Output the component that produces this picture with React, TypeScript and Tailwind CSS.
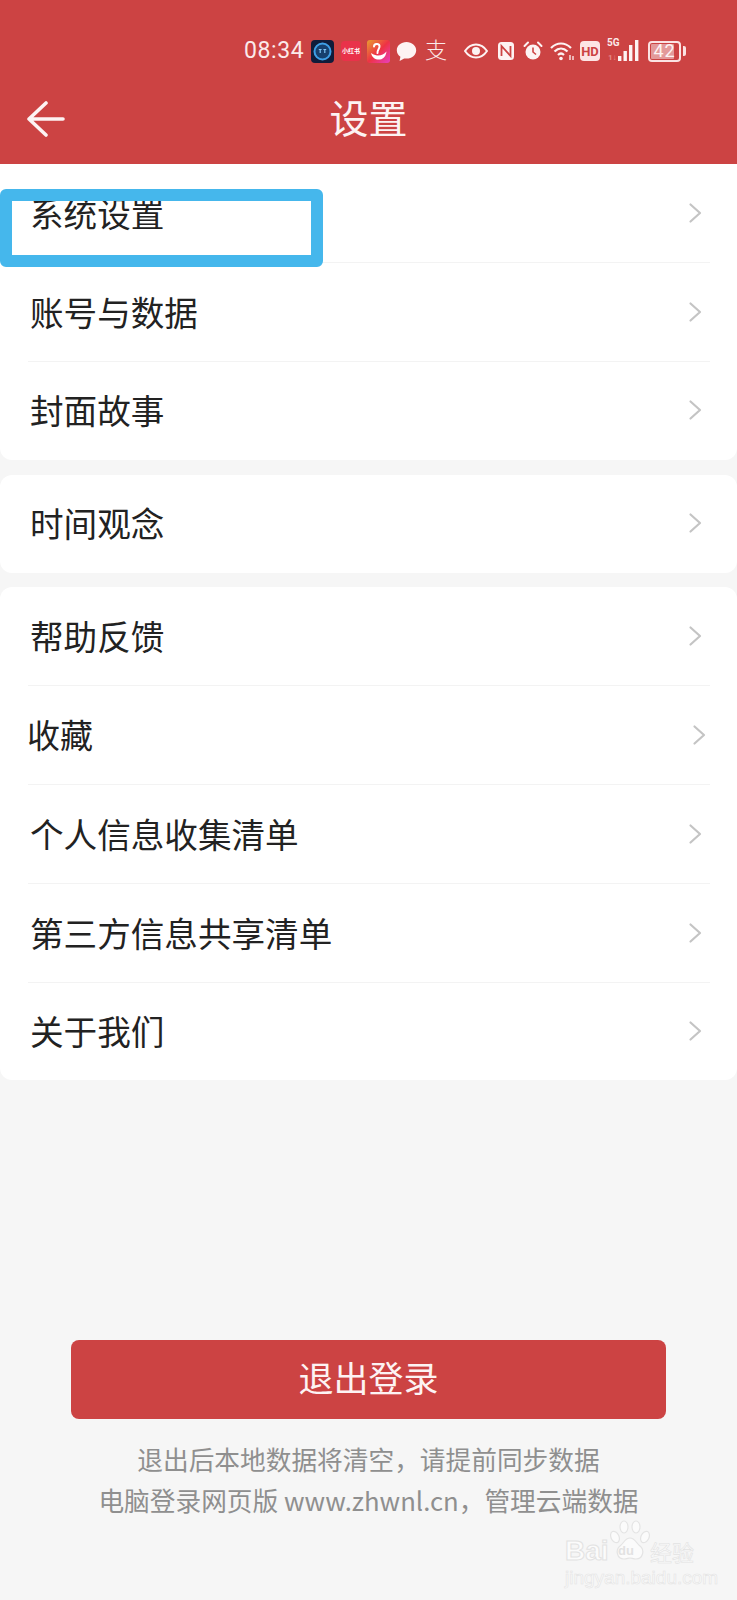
import React from "react";

const CJK = "font-['Noto_Sans_CJK_SC','Noto_Sans',sans-serif]";

function Chevron({ shift }: { shift?: boolean }) {
  return (
    <svg viewBox="0 0 14 22" className={shift ? "w-[14px] h-[22px] mr-[31px] -mt-[2px]" : "w-[14px] h-[22px] mr-[35px] -mt-[2px]"} fill="none" stroke="#c4c4c4" strokeWidth="2.2" strokeLinecap="round" strokeLinejoin="round">
      <path d="M2.5 2.5 12 11 2.5 19.5" />
    </svg>
  );
}

function Row({ label, last, alt }: { label: string; last?: boolean; alt?: boolean }) {
  return (
    <div className={last ? "relative h-[97px] flex items-center justify-between" : "relative h-[99px] flex items-center justify-between"}>
      <span className={alt ? "pl-[27px] -mt-[2px] text-[33px] text-[#222222] leading-none" : "pl-[30px] -mt-[2px] text-[33.6px] text-[#222222] leading-none"}>{label}</span>
      <Chevron shift={alt} />
      {!last && <div className="absolute bottom-0 left-[28px] right-[27px] h-px bg-[#f3f3f3]" />}
    </div>
  );
}

function StatusBar() {
  return (
    <div className="mt-[30px] h-[42px] flex items-center pl-[244px] text-[#fbeaea]">
      <span className="font-['Roboto',sans-serif] text-[23px] tracking-[0.6px] w-[67px] font-normal">08:34</span>
      <svg viewBox="0 0 23 23" className="w-[23px] h-[23px]">
        <rect width="23" height="23" rx="4" fill="#101c3a" />
        <circle cx="11.5" cy="11.5" r="8" fill="#17406e" stroke="#3f9fe6" strokeWidth="2" />
        <path d="M7.8 9.500h2.800M9.200 9.500v3.500M12.400 9.500h2.800M13.800 9.500v3.500" stroke="#7fc4f5" strokeWidth="1.2" />
      </svg>
      <div className={`ml-[7px] w-[20px] h-[20px] rounded-[4px] bg-[#e9324a] flex items-center justify-center text-[6px] font-bold text-white leading-none whitespace-nowrap ${CJK}`}>小红书</div>
      <svg viewBox="0 0 23 23" className="ml-[6px] w-[23px] h-[23px]">
        <defs>
          <linearGradient id="sw" x1="0" y1="0" x2="1" y2="1">
            <stop offset="0" stopColor="#e8a030" />
            <stop offset="0.5" stopColor="#ee3344" />
            <stop offset="1" stopColor="#e83fc0" />
          </linearGradient>
        </defs>
        <rect width="23" height="23" rx="3" fill="url(#sw)" />
        <path d="M7 6.500c0-3 5-3.500 5.500-.5.400 2.500-2.500 4-2 7" fill="none" stroke="#fff" strokeWidth="2" strokeLinecap="round" />
        <path d="M4 13c1 5 5 7 9 6.500 4-.5 6-4 6.500-8-2.500 3-6 4.500-9.500 4-2.500-.3-4.500-1.500-6-2.500z" fill="#fff" />
      </svg>
      <svg viewBox="0 0 21 21" className="ml-[6px] w-[21px] h-[21px]" fill="#fdf3f3">
        <path d="M10.500 1C5 1 .8 4.600.8 9.300c0 2.700 1.400 5 3.600 6.500L3.600 20l4.600-2.600c.7.1 1.500.2 2.300.2 5.400 0 9.700-3.700 9.700-8.300S15.900 1 10.500 1z" />
      </svg>
      <span className={`ml-[8px] w-[21px] -mt-[6px] text-[22px] leading-none font-light text-[#fbeaea] ${CJK}`}>支</span>
      <svg viewBox="0 0 24 16" className="ml-[18px] w-[24px] h-[16px]" fill="none">
        <path d="M1 8c3-4.500 7-6.500 11-6.500S20 3.500 23 8c-3 4.500-7 6.500-11 6.500S4 12.500 1 8z" stroke="#fdf3f3" strokeWidth="2" />
        <circle cx="12" cy="8" r="4" fill="#fdf3f3" />
      </svg>
      <svg viewBox="0 0 18 20" className="ml-[9px] w-[18px] h-[20px]" fill="none" stroke="#fdf3f3">
        <rect x="1" y="1" width="16" height="18" rx="3.500" fill="#fdf3f3" stroke="none" />
        <path d="M4.500 15V5l9 10V5" stroke="#cc4343" strokeWidth="1.800" />
      </svg>
      <svg viewBox="0 0 20 20" className="ml-[8px] w-[20px] h-[20px]" fill="none">
        <circle cx="10" cy="11" r="7.500" fill="#fdf3f3" />
        <path d="M10 6.500V11l3 2.500" stroke="#cc4343" strokeWidth="1.600" />
        <path d="M1.500 5 5 1.500M18.500 5 15 1.500" stroke="#fdf3f3" strokeWidth="2" strokeLinecap="round" />
      </svg>
      <svg viewBox="0 0 25 20" className="ml-[7px] w-[25px] h-[20px]" fill="none" stroke="#fdf3f3" strokeWidth="2.200">
        <path d="M1 7c6-6 14-6 20 0M4.500 10.500c4-4 9-4 13 0M8 14c2-2 4-2 6 0" />
        <circle cx="11" cy="17.500" r="1.800" fill="#fdf3f3" stroke="none" />
        <path d="M20 14v5M23 15v4" strokeWidth="1.300" />
      </svg>
      <div className="ml-[5px] w-[20px] h-[20px] rounded-[4px] bg-[#fde5e5] flex items-center justify-center text-[#cc4343] text-[13px] font-bold leading-none font-['Roboto',sans-serif]">HD</div>
      <div className="ml-[7px] relative w-[34px] h-[24px]">
        <span className="absolute left-0 -top-[1px] text-[10px] font-bold leading-none text-[#fbeaea] font-['Roboto',sans-serif]">5G</span>
        <span className="absolute left-[1px] top-[15px] text-[8px] font-bold leading-none text-[#e58a8a] font-['Roboto',sans-serif]">1↓</span>
        <svg viewBox="0 0 34 24" className="absolute inset-0 w-[34px] h-[24px]" fill="#fdf3f3">
          <rect x="11" y="17" width="3.400" height="5" />
          <rect x="16.500" y="12" width="3.400" height="10" />
          <rect x="22" y="6" width="3.400" height="16" />
          <rect x="28" y="1" width="3.400" height="21" />
        </svg>
      </div>
      <div className="ml-[7px] flex items-center">
        <div className="relative w-[33px] h-[21px] border-2 border-[#fbe3e3] rounded-[4px] flex items-center justify-center">
          <div className="absolute left-[1px] top-[1px] bottom-[1px] w-[23px] bg-[#e39a9a] rounded-[1px]" />
          <span className="relative text-[18px] leading-none text-[#fdf3f3] font-['Roboto',sans-serif] tracking-[1px]">42</span>
        </div>
        <div className="ml-[2px] w-[3px] h-[10px] rounded-r-[2px] bg-[#fbe3e3]" />
      </div>
    </div>
  );
}

function Watermark() {
  return (
    <div className="absolute left-[560px] top-[1518px] w-[140px] h-[68px] text-[#fbfbfb] pointer-events-none">
      <svg viewBox="0 0 40 42" className="absolute left-[50px] top-[2px] w-[40px] h-[42px]" fill="#fbfbfb" stroke="#e4e4e4" strokeWidth="1.200">
        <ellipse cx="5" cy="17" rx="4" ry="6" transform="rotate(-25 5 17)" />
        <ellipse cx="14" cy="7" rx="4" ry="6" />
        <ellipse cx="26" cy="7" rx="4" ry="6" />
        <ellipse cx="35" cy="17" rx="4" ry="6" transform="rotate(25 35 17)" />
        <path d="M20 18c-5 0-6 5-10 8-5 4-3 13 4 13 3 0 4-1 6-1s3 1 6 1c7 0 9-9 4-13-4-3-5-8-10-8z" />
      </svg>
      <span className="absolute left-[58px] top-[26px] text-[13px] leading-none font-bold font-['Liberation_Sans',sans-serif] text-[#e2e2e2]">du</span>
      <div className="absolute left-[5px] top-[19px] flex items-end leading-none whitespace-nowrap font-['Liberation_Sans',sans-serif] text-[28px] font-bold [-webkit-text-stroke:1px_#e2e2e2]">Bai</div>
      <div className={`absolute left-[90px] top-[22px] text-[22px] leading-none whitespace-nowrap [-webkit-text-stroke:0.6px_#e2e2e2] ${CJK}`}>经验</div>
      <div className="absolute left-[5px] top-[50px] text-[19px] leading-none whitespace-nowrap font-['Liberation_Sans',sans-serif] [-webkit-text-stroke:0.6px_#e4e4e4]">jingyan.baidu.com</div>
    </div>
  );
}

export default function App() {
  return (
    <div className={`relative w-[737px] h-[1600px] bg-[#f6f6f6] flex flex-col overflow-hidden ${CJK}`}>
      <header className="h-[164px] bg-[#cc4343] shrink-0">
        <StatusBar />
        <div className="relative h-[92px] flex items-center justify-center">
          <svg viewBox="0 0 38 36" className="absolute left-[27px] top-[29px] w-[38px] h-[36px]" fill="none" stroke="#fdf3f3" strokeWidth="3.600" strokeLinecap="round" strokeLinejoin="round">
            <path d="M19 2 2 18l17 16M2 18h34" />
          </svg>
          <span className="text-[39px] leading-none text-[#fdf3f3] -mt-[3px]">设置</span>
        </div>
      </header>

      <section className="h-[296px] bg-white rounded-b-[12px]">
        <Row label="系统设置" />
        <Row label="账号与数据" />
        <Row label="封面故事" last />
      </section>

      <section className="mt-[15px] h-[98px] bg-white rounded-[12px] flex flex-col justify-center">
        <Row label="时间观念" last />
      </section>

      <section className="mt-[14px] bg-white rounded-[12px]">
        <Row label="帮助反馈" />
        <Row label="收藏" alt />
        <Row label="个人信息收集清单" />
        <Row label="第三方信息共享清单" />
        <Row label="关于我们" last />
      </section>

      <div className="mt-auto mb-[80px] flex flex-col items-center">
        <button className="w-[595px] h-[79px] rounded-[8px] bg-[#cc4343] text-[#fdf3f3] text-[35px] leading-none pb-[7px]">退出登录</button>
        <p className="mt-[19px] text-[25.7px] leading-[41px] text-[#8f8f8f] text-center whitespace-nowrap">退出后本地数据将清空，请提前同步数据</p>
        <p className="text-[25.7px] leading-[41px] text-[#8f8f8f] text-center whitespace-nowrap">电脑登录网页版 www.zhwnl.cn，管理云端数据</p>
      </div>

      <div className="absolute left-0 top-[189px] w-[323px] h-[78px] border-[12px] border-[#45b7ec] rounded-[6px]" />
      <Watermark />
    </div>
  );
}
